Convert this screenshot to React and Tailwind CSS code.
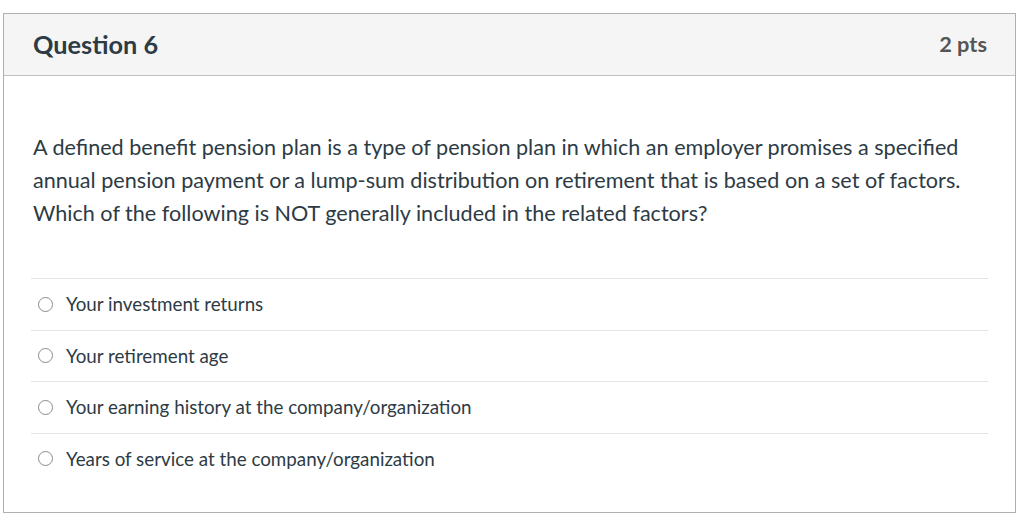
export default function App() {
  const answers = [
    "Your investment returns",
    "Your retirement age",
    "Your earning history at the company/organization",
    "Years of service at the company/organization",
  ];

  return (
    <div className="w-[1024px] h-[520px] bg-white pt-[13px] pl-[3px] font-['Lato',sans-serif]">
      <div className="w-[1013px] h-[500px] border border-[#b0b0b0] flex flex-col">
        {/* header */}
        <div className="h-[62px] bg-[#f5f5f5] border-b border-[#c2c2c2] flex items-center justify-between pl-[29px] pr-[28px]">
          <h2 className="text-[25.3px] font-bold text-[#2d3b45]">Question 6</h2>
          <span className="text-[21.8px] font-bold text-[#555555]">2 pts</span>
        </div>

        {/* body */}
        <div className="px-[27px] pt-[55px]">
          <p className="pl-[2px] text-[21.6px] leading-[33px] text-[#2d3b45]">
            A defined benefit pension plan is a type of pension plan in which an employer promises a specified
            annual pension payment or a lump-sum distribution on retirement that is based on a set of factors.
            Which of the following is NOT generally included in the related factors?
          </p>

          <div className="mt-[48px]">
            {answers.map((a) => (
              <div key={a} className="h-[51.5px] border-t border-[#e4e4e4] flex items-center pl-[7px] gap-[13px]">
                <span className="w-[15px] h-[15px] rounded-full border border-[#8a8a8a] bg-white shrink-0" />
                <span className="text-[18.8px] text-[#2d3b45]">{a}</span>
              </div>
            ))}
          </div>
        </div>
      </div>
    </div>
  );
}
